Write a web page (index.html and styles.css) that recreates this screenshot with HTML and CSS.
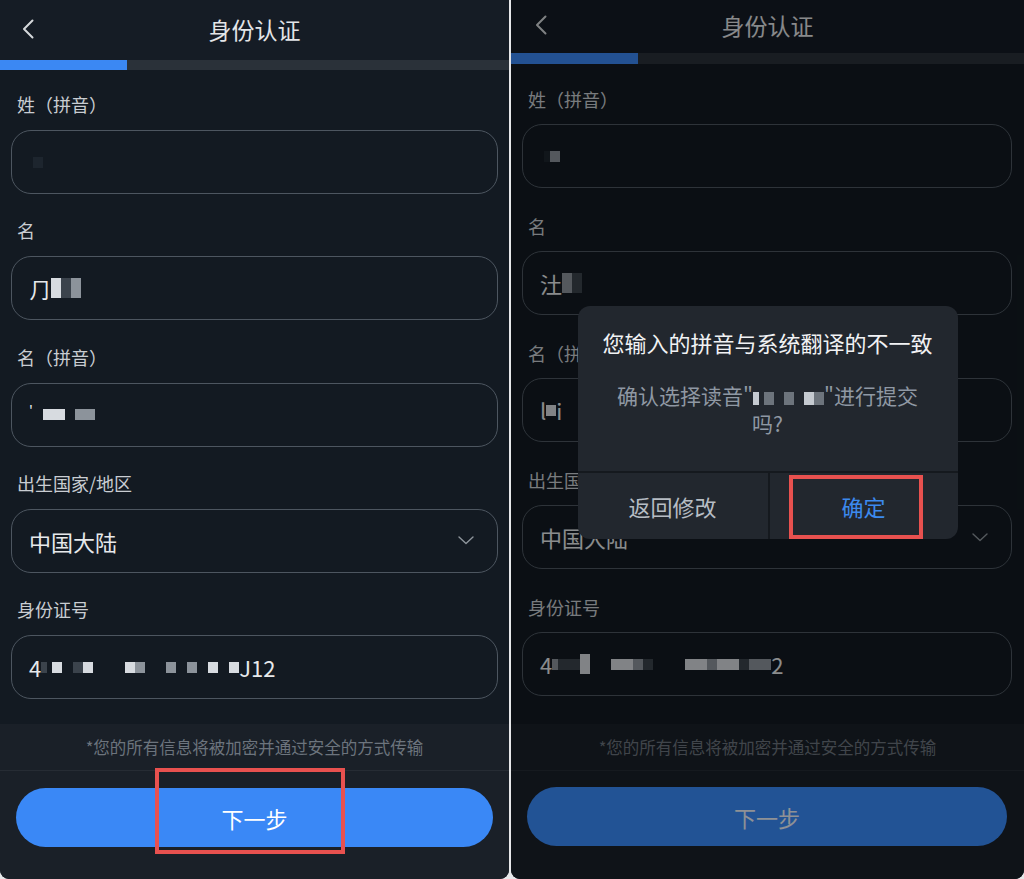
FILE: index.html
```html
<!DOCTYPE html>
<html lang="zh-CN">
<head>
  <meta charset="UTF-8" />
  <meta name="viewport" content="width=device-width, initial-scale=1" />
  <title>身份认证</title>
  <link rel="stylesheet" href="styles.css">
</head>
<body>
  <div class="screens">

    <!-- 第一屏：填写信息 -->
    <section class="phone">
      <header class="nav">
        <svg class="back" width="12" height="20" viewBox="0 0 12 20"><path d="M10.5 1.5 L2 10 L10.5 18.5" fill="none" stroke="#d5d8db" stroke-width="2" stroke-linecap="round" stroke-linejoin="round"/></svg>
        <h1 class="nav-title">身份认证</h1>
        <span></span>
      </header>
      <div class="progress"><div class="progress-fill"></div></div>

      <div class="form">
        <div class="field">
          <div class="label">姓（拼音）</div>
          <div class="input"><span class="sq sq-faint"></span></div>
        </div>
        <div class="field">
          <div class="label">名</div>
          <div class="input"><span class="txt">⺆</span><span class="sq sq-l tall"></span><span class="sq sq-d tall"></span><span class="sq sq-m tall"></span></div>
        </div>
        <div class="field">
          <div class="label">名（拼音）</div>
          <div class="input"><span class="txt small">'</span><span class="sq sq-l wide gap-m"></span><span class="sq sq-m gap-m"></span><span class="sq sq-m"></span></div>
        </div>
        <div class="field">
          <div class="label">出生国家/地区</div>
          <div class="input select">
            <span class="txt">中国大陆</span>
            <svg class="chev" width="16" height="9" viewBox="0 0 16 9"><path d="M1 1 L8 7.5 L15 1" fill="none" stroke="#8e959c" stroke-width="1.4" stroke-linecap="round" stroke-linejoin="round"/></svg>
          </div>
        </div>
        <div class="field">
          <div class="label">身份证号</div>
          <div class="input">
            <span class="txt">4</span><span class="sq sq-d half"></span><span class="sq sq-l gap-t"></span><span class="sq sq-d gap-s"></span><span class="sq sq-l"></span><span class="sq sq-l gap-l"></span><span class="sq sq-m"></span><span class="sq sq-m gap-xl"></span><span class="sq sq-m gap-s"></span><span class="sq sq-l gap-s"></span><span class="sq sq-l gap-s"></span><span class="txt">J12</span>
          </div>
        </div>
      </div>

      <footer class="foot">
        <p class="note">*您的所有信息将被加密并通过安全的方式传输</p>
        <div class="foot-action">
          <button class="btn-next">下一步</button>
        </div>
        <div class="mark mark-next"></div>
      </footer>
    </section>

    <!-- 第二屏：拼音确认弹窗 -->
    <section class="phone phone-dim">
      <header class="nav">
        <svg class="back" width="12" height="20" viewBox="0 0 12 20"><path d="M10.5 1.5 L2 10 L10.5 18.5" fill="none" stroke="#d5d8db" stroke-width="2" stroke-linecap="round" stroke-linejoin="round"/></svg>
        <h1 class="nav-title">身份认证</h1>
        <span></span>
      </header>
      <div class="progress"><div class="progress-fill"></div></div>

      <div class="form">
        <div class="field">
          <div class="label">姓（拼音）</div>
          <div class="input"><span class="sq sq-faint half"></span><span class="sq sq-m"></span></div>
        </div>
        <div class="field">
          <div class="label">名</div>
          <div class="input"><span class="txt">汢</span><span class="sq sq-m tall"></span><span class="sq sq-d tall"></span></div>
        </div>
        <div class="field">
          <div class="label">名（拼音）</div>
          <div class="input"><span class="txt">l</span><span class="sq sq-l"></span><span class="txt">i</span></div>
        </div>
        <div class="field">
          <div class="label">出生国家/地区</div>
          <div class="input select">
            <span class="txt">中国大陆</span>
            <svg class="chev" width="16" height="9" viewBox="0 0 16 9"><path d="M1 1 L8 7.5 L15 1" fill="none" stroke="#8e959c" stroke-width="1.4" stroke-linecap="round" stroke-linejoin="round"/></svg>
          </div>
        </div>
        <div class="field">
          <div class="label">身份证号</div>
          <div class="input">
            <span class="txt">4</span><span class="sq sq-m half"></span><span class="sq sq-d wide"></span><span class="sq sq-l tall"></span><span class="sq sq-l gap-xl wide"></span><span class="sq sq-m"></span><span class="sq sq-d"></span><span class="sq sq-l gap-l wide"></span><span class="sq sq-m"></span><span class="sq sq-l wide"></span><span class="sq sq-d"></span><span class="sq sq-m wide"></span><span class="txt">2</span>
          </div>
        </div>
      </div>

      <footer class="foot">
        <p class="note">*您的所有信息将被加密并通过安全的方式传输</p>
        <div class="foot-action">
          <button class="btn-next">下一步</button>
        </div>
      </footer>

      <div class="mask">
        <div class="dialog" role="dialog">
          <div class="dialog-title">您输入的拼音与系统翻译的不一致</div>
          <div class="dialog-body">确认选择读音"<span class="sq sq-l half"></span><span class="sq sq-m gap-t"></span><span class="sq sq-m gap-m"></span><span class="sq sq-l gap-m"></span><span class="sq sq-m"></span>"进行提交<br>吗?</div>
          <div class="dialog-actions">
            <button class="dialog-btn">返回修改</button>
            <button class="dialog-btn dialog-btn-ok">确定<span class="mark mark-ok"></span></button>
          </div>
        </div>
      </div>
    </section>

  </div>
</body>
</html>
```

FILE: styles.css
```css
    body {
      margin: 0;
      background: #fff;
      font-family: "Noto Sans CJK SC", "Noto Sans", sans-serif;
    }
    .screens {
      display: flex;
      gap: 2px;
      height: 879px;
      background: #e6e7e9;
    }

    /* 手机屏 */
    .phone {
      width: 509px;
      flex: none;
      height: 879px;
      display: flex;
      flex-direction: column;
      background: #131a22;
      border-radius: 0 0 9px 9px;
      overflow: hidden;
      position: relative;
    }
    .phone-dim {
      width: 513px;
    }

    .nav {
      height: 60px;
      flex: none;
      display: grid;
      grid-template-columns: 1fr auto 1fr;
      align-items: center;
      background: #151c25;
      padding-bottom: 2px;
      box-sizing: border-box;
    }
    .back {
      margin-left: 22px;
    }
    .nav-title {
      margin: 0;
      font-size: 23px;
      font-weight: 400;
      color: #e3e5e8;
      line-height: 30px;
    }
    .phone-dim .nav {
      height: 53px;
      padding-bottom: 3px;
    }
    .phone-dim .back {
      margin-left: 24px;
    }

    .progress {
      height: 10px;
      flex: none;
      background: #2a3139;
    }
    .phone-dim .progress {
      height: 11px;
    }
    .progress-fill {
      width: 127px;
      height: 100%;
      background: #3b88f3;
    }

    /* 表单 */
    .form {
      flex: 1;
      padding: 22px 11px 0;
      display: flex;
      flex-direction: column;
      gap: 24.25px;
    }
    .phone-dim .form {
      padding: 23px 12px 0 11px;
      gap: 26px;
    }
    .label {
      padding-left: 6px;
      font-size: 18px;
      line-height: 24px;
      color: #c9cdd2;
      margin-bottom: 14px;
    }
    .phone-dim .label {
      margin-bottom: 13px;
    }
    .input {
      height: 64px;
      box-sizing: border-box;
      border: 1.5px solid #4d5660;
      border-radius: 20px;
      display: flex;
      align-items: center;
      padding: 0 17px;
      color: #e7e9eb;
      font-size: 22px;
    }
    .select {
      justify-content: space-between;
      padding-right: 23px;
    }
    .txt {
      line-height: 1;
    }
    .txt.small {
      font-size: 14px;
      margin-top: -8px;
    }

    /* 打码块 */
    .sq {
      display: inline-block;
      width: 10px;
      height: 11px;
      background: #c3c8ce;
    }
    .sq-l { background: #d7dbe0; }
    .sq-m { background: #8c939b; }
    .sq-d { background: #3b434c; }
    .sq-faint { background: #1d252e; margin-left: 4px; }
    .sq.half { width: 6px; }
    .sq.wide { width: 22px; }
    .sq.tall { height: 20px; }
    .gap-t { margin-left: 5px; }
    .gap-s { margin-left: 11px; }
    .gap-m { margin-left: 10px; }
    .gap-l { margin-left: 32px; }
    .gap-xl { margin-left: 21px; }

    /* 底部 */
    .foot {
      flex: none;
      height: 155px;
      background: #1a2028;
      position: relative;
    }
    .note {
      margin: 0;
      height: 46px;
      line-height: 46px;
      text-align: center;
      font-size: 16.5px;
      color: #6c747d;
    }
    .foot-action {
      border-top: 1px solid #262c34;
      padding: 17px 16px 0;
    }
    .phone-dim .foot-action {
      padding: 16px 17px 0 16px;
    }
    .btn-next {
      width: 100%;
      height: 59px;
      border: none;
      border-radius: 30px;
      background: #3a88f6;
      color: #fff;
      font-family: inherit;
      font-size: 22px;
      cursor: pointer;
    }
    .phone-dim .btn-next {
      background: #3a8af8;
      color: #eef2f8;
    }

    /* 标注框 */
    .mark {
      position: absolute;
      box-sizing: border-box;
      border: 4px solid #e8514f;
      pointer-events: none;
    }
    .mark-next {
      left: 155px;
      top: 44px;
      width: 190px;
      height: 86px;
    }

    /* 弹窗 */
    .mask {
      position: absolute;
      inset: 0;
      background: rgba(0, 0, 0, 0.4);
      display: flex;
      justify-content: center;
      align-items: flex-start;
      padding-top: 306px;
      box-sizing: border-box;
    }
    .dialog {
      width: 380px;
      background: #22272e;
      border-radius: 12px;
      overflow: hidden;
    }
    .dialog-title {
      padding-top: 21px;
      text-align: center;
      font-size: 22px;
      line-height: 30px;
      color: #f1f2f4;
    }
    .dialog-body {
      margin-top: 24px;
      padding: 0 14px 34px;
      text-align: center;
      font-size: 21px;
      line-height: 28px;
      color: #8f98a3;
    }
    .dialog-body .sq {
      height: 13px;
      vertical-align: -1px;
    }
    .dialog-body .sq-l { background: #c5cad0; }
    .dialog-body .sq-m { background: #6d747c; }
    .dialog-actions {
      display: grid;
      grid-template-columns: 1fr 1fr;
      border-top: 2px solid #15191e;
    }
    .dialog-btn {
      height: 66px;
      border: none;
      background: transparent;
      font-family: inherit;
      font-size: 22px;
      color: #b7bdc4;
      cursor: pointer;
      position: relative;
    }
    .dialog-btn-ok {
      border-left: 2px solid #15191e;
      color: #3c8aee;
    }
    .mark-ok {
      left: 19px;
      top: 2px;
      width: 134px;
      height: 64px;
    }
```
